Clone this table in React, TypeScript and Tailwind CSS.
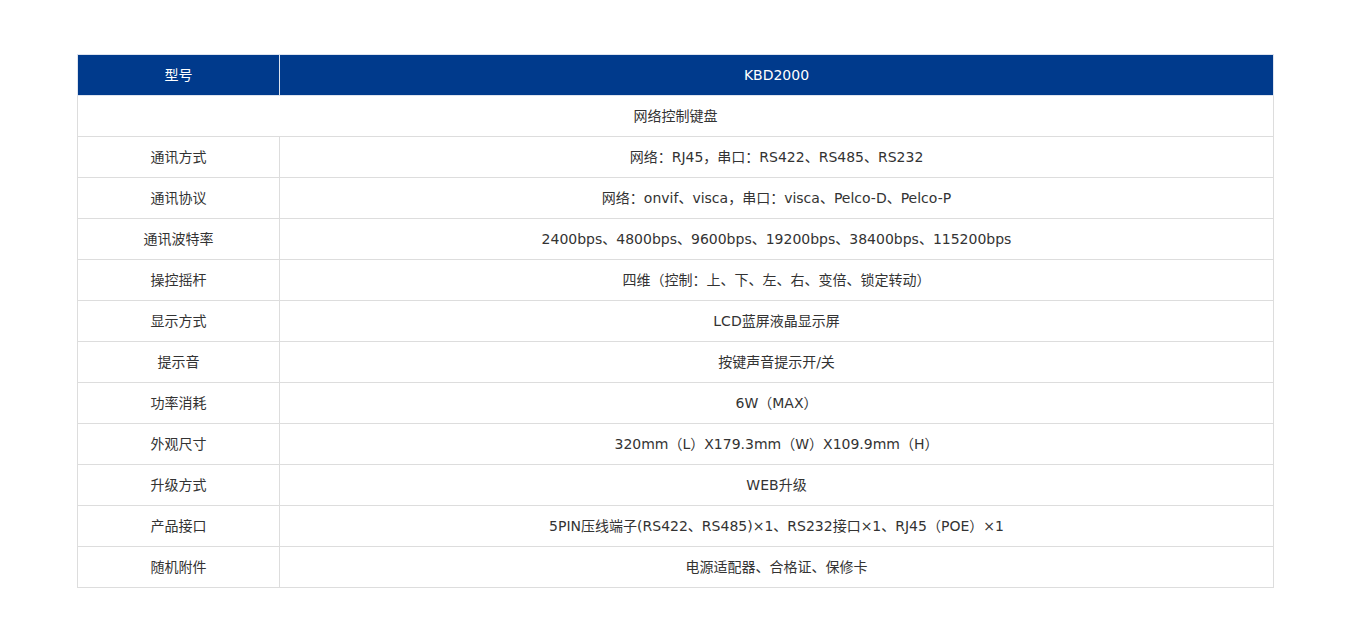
const ROWS: [string, string][] = [
  ["通讯方式", "网络：RJ45，串口：RS422、RS485、RS232"],
  ["通讯协议", "网络：onvif、visca，串口：visca、Pelco-D、Pelco-P"],
  ["通讯波特率", "2400bps、4800bps、9600bps、19200bps、38400bps、115200bps"],
  ["操控摇杆", "四维（控制：上、下、左、右、变倍、锁定转动）"],
  ["显示方式", "LCD蓝屏液晶显示屏"],
  ["提示音", "按键声音提示开/关"],
  ["功率消耗", "6W（MAX）"],
  ["外观尺寸", "320mm（L）X179.3mm（W）X109.9mm（H）"],
  ["升级方式", "WEB升级"],
  ["产品接口", "5PIN压线端子(RS422、RS485)×1、RS232接口×1、RJ45（POE）×1"],
  ["随机附件", "电源适配器、合格证、保修卡"],
];

export default function App() {
  return (
    <div
      className="min-h-[627px] bg-white pt-[54px] px-[77px] text-[14px] text-[#333]"
      style={{ fontFamily: '"DejaVu Sans", "Noto Sans CJK SC", sans-serif' }}
    >
      <table className="w-[1197px] table-fixed border-collapse">
        <colgroup>
          <col className="w-[202px]" />
          <col />
        </colgroup>
        <thead>
          <tr className="h-[41px] bg-[#003a8c] text-white">
            <th className="border border-[#dde3ee] font-normal">型号</th>
            <th className="border border-[#dde3ee] font-normal">KBD2000</th>
          </tr>
        </thead>
        <tbody>
          <tr className="h-[41px]">
            <td colSpan={2} className="border border-[#ddd] text-center">
              网络控制键盘
            </td>
          </tr>
          {ROWS.map(([label, value]) => (
            <tr key={label} className="h-[41px]">
              <td className="border border-[#ddd] text-center">{label}</td>
              <td className="border border-[#ddd] text-center">{value}</td>
            </tr>
          ))}
        </tbody>
      </table>
    </div>
  );
}
